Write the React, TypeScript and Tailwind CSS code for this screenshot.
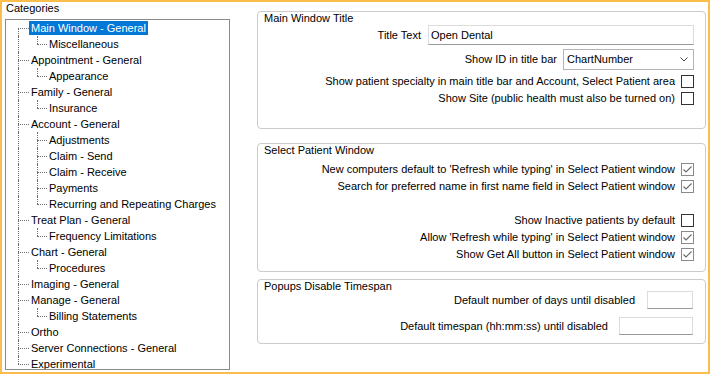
import React from 'react';

type Node = { label: string; children?: string[] };

const tree: Node[] = [
  { label: 'Main Window - General', children: ['Miscellaneous'] },
  { label: 'Appointment - General', children: ['Appearance'] },
  { label: 'Family - General', children: ['Insurance'] },
  {
    label: 'Account - General',
    children: ['Adjustments', 'Claim - Send', 'Claim - Receive', 'Payments', 'Recurring and Repeating Charges'],
  },
  { label: 'Treat Plan - General', children: ['Frequency Limitations'] },
  { label: 'Chart - General', children: ['Procedures'] },
  { label: 'Imaging - General' },
  { label: 'Manage - General', children: ['Billing Statements'] },
  { label: 'Ortho' },
  { label: 'Server Connections - General' },
  { label: 'Experimental' },
];

const dot = 'border-dotted border-[#6e6e6e]';

const TopRow = ({ label, first, last, selected }: { label: string; first: boolean; last: boolean; selected?: boolean }) => (
  <div className="flex h-[16px] items-stretch">
    <div className="w-[12px] shrink-0" />
    <div className="flex w-[11px] shrink-0 flex-col">
      <div className={`h-[8px] ${first ? '' : `border-l ${dot}`}`} />
      <div className={`h-[8px] border-t ${last ? '' : 'border-l'} ${dot}`} />
    </div>
    <div className="flex items-center">
      <span className={`px-[2px] leading-[14px] ${selected ? 'bg-[#0078d7] text-white' : ''}`}>{label}</span>
    </div>
  </div>
);

const ChildRow = ({ label, last }: { label: string; last: boolean }) => (
  <div className="flex h-[16px] items-stretch">
    <div className="w-[12px] shrink-0" />
    <div className={`w-[19px] shrink-0 border-l ${dot}`} />
    <div className="flex w-[10px] shrink-0 flex-col">
      <div className={`h-[8px] border-l ${dot}`} />
      <div className={`h-[8px] border-t ${last ? '' : 'border-l'} ${dot}`} />
    </div>
    <div className="flex items-center pl-[2px]">
      <span className="leading-[14px]">{label}</span>
    </div>
  </div>
);

const Check = ({ checked }: { checked?: boolean }) => (
  <div
    className={`flex h-[13px] w-[13px] shrink-0 items-center justify-center border bg-white ${
      checked ? 'border-[#8a8a8a]' : 'border-[#333333]'
    }`}
  >
    {checked && (
      <svg width="11" height="11" viewBox="0 0 11 11">
        <polyline points="1.5,5.5 4,8 9.5,2.5" fill="none" stroke="#6a6a6a" strokeWidth="1.1" />
      </svg>
    )}
  </div>
);

const CheckRow = ({ label, checked }: { label: string; checked?: boolean }) => (
  <div className="flex h-[17px] items-center justify-end gap-[6px]">
    <span>{label}</span>
    <Check checked={checked} />
  </div>
);

const Group = ({ title, className, children }: { title: string; className: string; children: React.ReactNode }) => (
  <div className={`flex flex-col rounded-[4px] border border-[#cbcbcb] pl-[6px] pr-[11px] ${className}`}>
    <div className="h-[13px] leading-[13px]">{title}</div>
    {children}
  </div>
);

export default function App() {
  return (
    <div
      className="flex h-[374px] w-[710px] border-2 border-[#fbbd4b] bg-white text-[11px] text-black"
      style={{ fontFamily: '"Liberation Sans", Arial, sans-serif' }}
    >
      <div className="flex flex-col pl-[3px]">
        <div className="h-[17px] pl-[1px] leading-[13px]">Categories</div>
        <div className="h-[351px] w-[225px] overflow-hidden border border-[#8a8a8a]">
          {tree.map((n, i) => (
            <React.Fragment key={n.label}>
              <TopRow label={n.label} first={i === 0} last={i === tree.length - 1} selected={i === 0} />
              {n.children?.map((c, j) => (
                <ChildRow key={c} label={c} last={j === n.children!.length - 1} />
              ))}
            </React.Fragment>
          ))}
        </div>
      </div>

      <div className="ml-[27px] flex w-[449px] flex-col">
        <Group title="Main Window Title" className="mt-[9px] h-[118px]">
          <div className="flex h-[20px] items-center justify-end gap-[7px]">
            <span>Title Text</span>
            <div className="flex h-[20px] w-[266px] items-center border border-[#dcdcdc] border-b-[#9a9a9a] pl-[2px]">
              Open Dental
            </div>
          </div>
          <div className="mt-[4px] flex h-[21px] items-center justify-end gap-[6px]">
            <span>Show ID in title bar</span>
            <div className="flex h-[21px] w-[131px] items-center justify-between border border-[#b4b4b4] pl-[3px] pr-[5px]">
              <span>ChartNumber</span>
              <svg width="8" height="5" viewBox="0 0 8 5">
                <polyline points="0.5,0.5 4,4 7.5,0.5" fill="none" stroke="#444" strokeWidth="1" />
              </svg>
            </div>
          </div>
          <div className="mt-[3px]">
            <CheckRow label="Show patient specialty in main title bar and Account, Select Patient area" />
            <CheckRow label="Show Site (public health must also be turned on)" />
          </div>
        </Group>

        <Group title="Select Patient Window" className="mt-[14px] h-[129px]">
          <div className="mt-[4px]">
            <CheckRow label="New computers default to 'Refresh while typing' in Select Patient window" checked />
            <CheckRow label="Search for preferred name in first name field in Select Patient window" checked />
            <div className="h-[17px]" />
            <CheckRow label="Show Inactive patients by default" />
            <CheckRow label="Allow 'Refresh while typing' in Select Patient window" checked />
            <CheckRow label="Show Get All button in Select Patient window" checked />
          </div>
        </Group>

        <Group title="Popups Disable Timespan" className="mt-[7px] h-[65px]">
          <div className="-mt-[2px] flex h-[18px] items-center justify-end gap-[12px] pr-[1px]">
            <span>Default number of days until disabled</span>
            <div className="h-[18px] w-[46px] border border-[#dcdcdc] border-b-[#9a9a9a]" />
          </div>
          <div className="mt-[8px] flex h-[18px] items-center justify-end gap-[11px] pr-[1px]">
            <span>Default timespan (hh:mm:ss) until disabled</span>
            <div className="h-[18px] w-[74px] border border-[#dcdcdc] border-b-[#9a9a9a]" />
          </div>
        </Group>
      </div>
    </div>
  );
}
